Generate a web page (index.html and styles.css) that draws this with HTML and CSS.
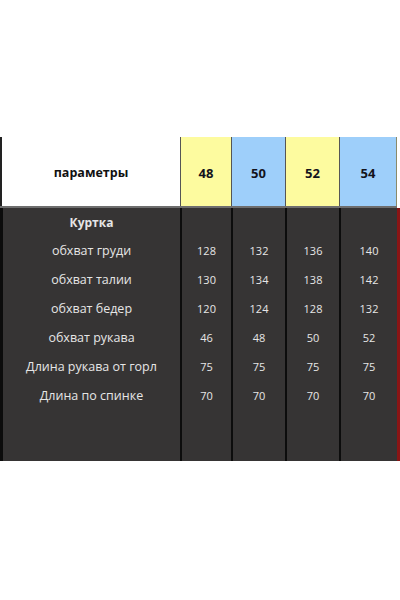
FILE: index.html
```html
<!DOCTYPE html>
<html lang="ru">
<head>
<meta charset="utf-8">
<link rel="stylesheet" href="styles.css">
</head>
<body>
<div class="page">
  <div class="table">
    <div class="head">
      <div class="hcell label">параметры</div>
      <div class="hcell yellow">48</div>
      <div class="hcell blue">50</div>
      <div class="hcell yellow">52</div>
      <div class="hcell blue last">54</div>
    </div>
    <div class="body">
      <div class="col labels">
        <div class="row first bold">Куртка</div>
        <div class="row">обхват груди</div>
        <div class="row">обхват талии</div>
        <div class="row">обхват бедер</div>
        <div class="row">обхват рукава</div>
        <div class="row">Длина рукава от горл</div>
        <div class="row">Длина по спинке</div>
      </div>
      <div class="col num w1">
        <div class="row first"></div>
        <div class="row">128</div><div class="row">130</div><div class="row">120</div><div class="row">46</div><div class="row">75</div><div class="row">70</div>
      </div>
      <div class="col num w2">
        <div class="row first"></div>
        <div class="row">132</div><div class="row">134</div><div class="row">124</div><div class="row">48</div><div class="row">75</div><div class="row">70</div>
      </div>
      <div class="col num w3">
        <div class="row first"></div>
        <div class="row">136</div><div class="row">138</div><div class="row">128</div><div class="row">50</div><div class="row">75</div><div class="row">70</div>
      </div>
      <div class="col num w4">
        <div class="row first"></div>
        <div class="row">140</div><div class="row">142</div><div class="row">132</div><div class="row">52</div><div class="row">75</div><div class="row">70</div>
      </div>
    </div>
  </div>
</div>
</body>
</html>
```

FILE: styles.css
```css
html, body {
  margin: 0;
  padding: 0;
  background: #ffffff;
}
.page {
  width: 400px;
  height: 600px;
  padding-top: 137px;
  box-sizing: border-box;
  font-family: "Open Sans", "Liberation Sans", sans-serif;
}
.table {
  width: 400px;
}
.head {
  display: grid;
  grid-template-columns: 180px 51px 54px 54px 58px;
  height: 69px;
  border-bottom: 2px solid #6e6e6e;
  width: 397px;
}
.hcell {
  display: flex;
  align-items: center;
  justify-content: center;
  font-weight: bold;
  font-size: 13px;
  color: #14141c;
  border-left: 1px solid #555;
  padding-top: 2px;
}
.hcell.label {
  background: #ffffff;
  border-left: 2px solid #222;
  font-size: 12.5px;
  color: #111;
}
.hcell.yellow { background: #fdfb9f; }
.hcell.blue { background: #9ecffa; }
.hcell.last { border-right: 1px solid #8a8a6a; }
.body {
  display: grid;
  grid-template-columns: 180px 51px 54px 54px 58px;
  height: 253px;
  width: 397px;
  background: #363434;
  border-right: 3px solid #8a1515;
}
.col {
  display: flex;
  flex-direction: column;
  border-left: 2px solid #0c0c0c;
}
.col.labels {
  border-left: 3px solid #0c0c0c;
}
.row {
  height: 29px;
  flex: none;
  display: flex;
  align-items: center;
  justify-content: center;
  color: #e6e6e6;
  font-size: 12.5px;
  white-space: nowrap;
}
.row.first { height: 28px; }
.row.bold { font-weight: bold; font-size: 12px; }
.num .row { font-size: 11px; }
```
